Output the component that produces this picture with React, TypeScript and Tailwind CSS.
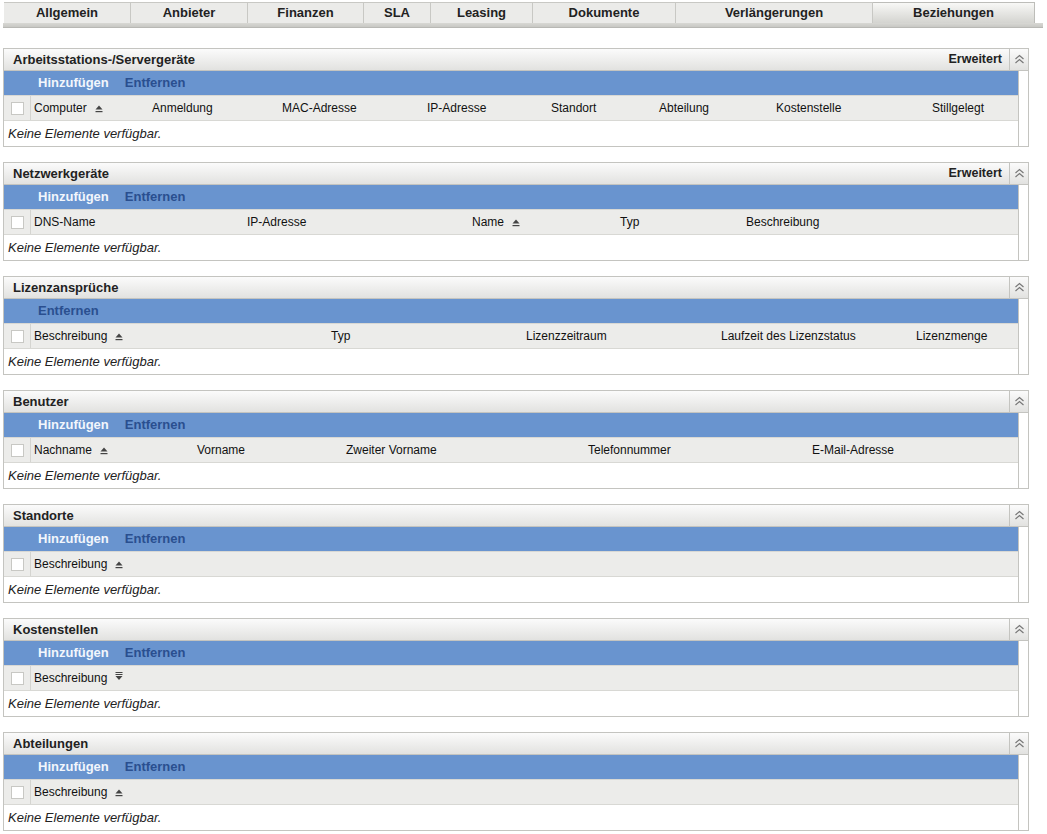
import React from 'react';

const FONT = { fontFamily: '"Liberation Sans", Arial, sans-serif' };

const tabs = [
  { label: 'Allgemein', w: 127 },
  { label: 'Anbieter', w: 117 },
  { label: 'Finanzen', w: 116 },
  { label: 'SLA', w: 67 },
  { label: 'Leasing', w: 102 },
  { label: 'Dokumente', w: 143 },
  { label: 'Verlängerungen', w: 197 },
  { label: 'Beziehungen', w: 162, active: true },
];

interface Col {
  label: string;
  w?: number;
  sort?: 'up' | 'down';
}

interface Section {
  title: string;
  extended?: boolean;
  add?: boolean;
  cols: Col[];
}

const sections: Section[] = [
  {
    title: 'Arbeitsstations-/Servergeräte',
    extended: true,
    add: true,
    cols: [
      { label: 'Computer', w: 118, sort: 'up' },
      { label: 'Anmeldung', w: 130 },
      { label: 'MAC-Adresse', w: 145 },
      { label: 'IP-Adresse', w: 124 },
      { label: 'Standort', w: 108 },
      { label: 'Abteilung', w: 117 },
      { label: 'Kostenstelle', w: 156 },
      { label: 'Stillgelegt' },
    ],
  },
  {
    title: 'Netzwerkgeräte',
    extended: true,
    add: true,
    cols: [
      { label: 'DNS-Name', w: 213 },
      { label: 'IP-Adresse', w: 225 },
      { label: 'Name', w: 148, sort: 'up' },
      { label: 'Typ', w: 126 },
      { label: 'Beschreibung' },
    ],
  },
  {
    title: 'Lizenzansprüche',
    cols: [
      { label: 'Beschreibung', w: 297, sort: 'up' },
      { label: 'Typ', w: 195 },
      { label: 'Lizenzzeitraum', w: 195 },
      { label: 'Laufzeit des Lizenzstatus', w: 195 },
      { label: 'Lizenzmenge' },
    ],
  },
  {
    title: 'Benutzer',
    add: true,
    cols: [
      { label: 'Nachname', w: 163, sort: 'up' },
      { label: 'Vorname', w: 149 },
      { label: 'Zweiter Vorname', w: 242 },
      { label: 'Telefonnummer', w: 224 },
      { label: 'E-Mail-Adresse' },
    ],
  },
  { title: 'Standorte', add: true, cols: [{ label: 'Beschreibung', sort: 'up' }] },
  { title: 'Kostenstellen', add: true, cols: [{ label: 'Beschreibung', sort: 'down' }] },
  { title: 'Abteilungen', add: true, cols: [{ label: 'Beschreibung', sort: 'up' }] },
];

function SortIcon({ dir }: { dir: 'up' | 'down' }) {
  if (dir === 'down') {
    return (
      <svg width="8" height="9" viewBox="0 0 8 9" className="ml-[8px] mb-[3px]">
        <rect x="0.5" y="0" width="7" height="1" fill="#444" />
        <rect x="0.5" y="2" width="7" height="1" fill="#444" />
        <path d="M0.5 4 L7.5 4 L4 8 Z" fill="#444" />
      </svg>
    );
  }
  return (
    <svg width="8" height="8" viewBox="0 0 8 8" className="ml-[8px] mt-[2px]">
      <path d="M0.5 4.5 L4 0.5 L7.5 4.5 Z" fill="#444" />
      <rect x="0.5" y="6" width="7" height="1.2" fill="#444" />
    </svg>
  );
}

function CollapseIcon() {
  return (
    <svg width="11" height="11" viewBox="0 0 11 11">
      <path d="M1.5 5 L5.5 1.5 L9.5 5" fill="none" stroke="#777" strokeWidth="1.2" />
      <path d="M1.5 9 L5.5 5.5 L9.5 9" fill="none" stroke="#777" strokeWidth="1.2" />
    </svg>
  );
}

function Panel({ section }: { section: Section }) {
  return (
    <div className="border border-[#c4c4c0] w-[1026px] bg-white">
      {/* Header */}
      <div className="flex h-[22px] bg-gradient-to-b from-[#fbfbfb] to-[#e2e2e0] border-b border-[#c4c4c0]">
        <div className="flex-1 flex items-center pl-[9px] text-[13px] font-bold text-[#222]">
          {section.title}
        </div>
        {section.extended && (
          <div className="flex items-center pr-[7px] text-[12.5px] font-bold text-[#222]">Erweitert</div>
        )}
        <div className="w-[19px] border-l border-[#c4c4c0] flex items-center justify-center">
          <CollapseIcon />
        </div>
      </div>
      <div className="flex">
        <div className="flex-1 border-r border-[#c4c4c0]">
          {/* Action bar */}
          <div className="h-[24px] bg-[#6994cf] flex items-center pl-[34px] gap-[16px] text-[13px] font-bold">
            {section.add && <span className="text-[#f2f6fc]">Hinzufügen</span>}
            <span className="text-[#2a4f8f]">Entfernen</span>
          </div>
          {/* Column header */}
          <div className="h-[26px] bg-[#ececea] border-t border-[#d8d8d4] border-b border-[#c4c4c0] flex items-stretch text-[12px] text-[#111]">
            <div className="w-[27px] border-r border-[#d4d4d0] flex items-center justify-center">
              <div className="w-[13px] h-[13px] bg-white border border-[#c8c8c4]" />
            </div>
            <div className="flex items-center pl-[3px]">
              {section.cols.map((c) => (
                <div
                  key={c.label}
                  className="flex items-center shrink-0"
                  style={c.w ? { width: c.w } : undefined}
                >
                  <span>{c.label}</span>
                  {c.sort && <SortIcon dir={c.sort} />}
                </div>
              ))}
            </div>
          </div>
          {/* Body */}
          <div className="h-[25px] flex items-center pl-[4px] text-[13px] italic text-[#222]">
            Keine Elemente verfügbar.
          </div>
        </div>
        <div className="w-[9px]" />
      </div>
    </div>
  );
}

export default function App() {
  return (
    <div className="w-[1047px] h-[834px] bg-white overflow-hidden" style={FONT}>
      {/* Tabs */}
      <div className="pt-[2px] pl-[3px]">
        <div className="flex pl-[1px]">
          {tabs.map((t) => (
            <div
              key={t.label}
              className={
                t.active
                  ? 'h-[21px] flex items-center justify-center text-[13px] font-bold text-[#222] bg-gradient-to-b from-[#f8f8f6] to-[#d4d4d0] border-t border-r border-[#bdbdb9]'
                  : 'h-[21px] flex items-center justify-center text-[13px] font-bold text-[#222] bg-[#ebebe9] border-t border-r border-[#c8c8c4]'
              }
              style={{ width: t.w }}
            >
              {t.label}
            </div>
          ))}
        </div>
        <div className="w-[1040px] h-[5px] bg-gradient-to-b from-[#d8d8d4] to-[#c8c8c4] border-b border-[#b8b8b4]" />
      </div>

      {/* Sections */}
      <div className="flex flex-col gap-[15px] pt-[20px] pl-[3px]">
        {sections.map((s) => (
          <Panel key={s.title} section={s} />
        ))}
      </div>
    </div>
  );
}
